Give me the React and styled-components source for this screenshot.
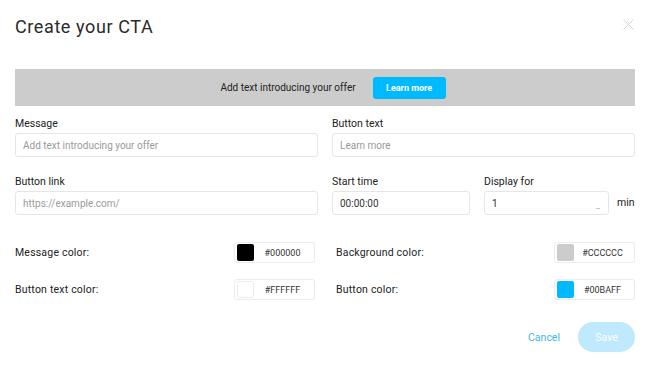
import React from "react";
import styled, { createGlobalStyle } from "styled-components";

const Global = createGlobalStyle`
  body {
    margin: 0;
    background: #fff;
    font-family: Roboto, "Liberation Sans", sans-serif;
    color: #333;
  }
`;

const Dialog = styled.div`
  width: 650px;
  height: 365px;
  box-sizing: border-box;
  padding: 14px 15px 0;
  position: relative;
`;

const Header = styled.div`
  display: flex;
  justify-content: space-between;
  align-items: flex-start;
  height: 55px;
`;

const Title = styled.h1`
  margin: 0;
  font-size: 18px;
  line-height: 26px;
  font-weight: 400;
  letter-spacing: 0.6px;
  color: #2a2a2a;
`;

const Close = styled.div`
  width: 11px;
  height: 11px;
  margin-top: 1px;
  margin-right: 1px;
  color: #d6d6d6;
`;

const Banner = styled.div`
  height: 37px;
  background: #cccccc;
  display: flex;
  align-items: center;
  justify-content: center;
  gap: 17px;
  padding-left: 16px;
`;

const BannerText = styled.span`
  font-size: 10px;
  color: #222;
`;

const BannerButton = styled.span`
  width: 73px;
  height: 22px;
  border-radius: 3px;
  background: #00baff;
  color: #fff;
  font-size: 9px;
  font-weight: 700;
  display: flex;
  align-items: center;
  justify-content: center;
`;

const Fields = styled.div`
  display: grid;
  grid-template-columns: 303px 303px;
  column-gap: 14px;
  row-gap: 19px;
  margin-top: 12px;
`;

const Field = styled.div`
  display: flex;
  flex-direction: column;
  width: ${(p) => p.$w || "auto"};
`;

const Label = styled.label`
  font-size: 10.5px;
  line-height: 12px;
  color: #222;
  margin-bottom: 3px;
`;

const Input = styled.div`
  height: 24px;
  box-sizing: border-box;
  border: 1px solid #e6e6e6;
  border-radius: 3px;
  padding: 0 7px;
  font-size: 10px;
  display: flex;
  align-items: center;
  color: ${(p) => (p.$placeholder ? "#9a9a9a" : "#333")};
  position: relative;
`;

const Spin = styled.span`
  position: absolute;
  right: 8px;
  bottom: 5px;
  width: 4px;
  height: 1px;
  background: #c8c8c8;
`;

const SplitRow = styled.div`
  display: flex;
  align-items: flex-end;
  gap: 14px;
`;

const Unit = styled.span`
  font-size: 10.5px;
  color: #222;
  line-height: 24px;
  margin-left: -6px;
`;

const Colors = styled.div`
  display: grid;
  grid-template-columns: 300px 299px;
  column-gap: 21px;
  row-gap: 16px;
  margin-top: 27px;
`;

const ColorRow = styled.div`
  display: flex;
  align-items: center;
  justify-content: space-between;
  height: 21px;
`;

const ColorLabel = styled.span`
  font-size: 10.5px;
  line-height: 12px;
  color: #222;
  letter-spacing: 0.2px;
  margin-top: 1px;
`;

const ColorBox = styled.div`
  width: 81px;
  height: 21px;
  box-sizing: border-box;
  border: 1px solid #ececec;
  border-radius: 3px;
  display: flex;
  align-items: center;
  padding-left: 2px;
`;

const Swatch = styled.span`
  width: 17px;
  height: 17px;
  border-radius: 2px;
  background: ${(p) => p.$color};
  border: ${(p) => (p.$color === "#FFFFFF" ? "1px solid #ececec" : "none")};
  box-sizing: border-box;
`;

const Hex = styled.span`
  flex: 1;
  text-align: center;
  font-size: 9px;
  color: #333;
  padding-right: 3px;
`;

const Footer = styled.div`
  display: flex;
  justify-content: flex-end;
  align-items: center;
  gap: 18px;
  margin-top: 22px;
`;

const Cancel = styled.span`
  font-size: 10.5px;
  color: #45b5e6;
`;

const Save = styled.span`
  width: 57px;
  height: 30px;
  border-radius: 15px;
  background: #bfe9fc;
  color: #fff;
  font-size: 10.5px;
  display: flex;
  align-items: center;
  justify-content: center;
`;

const colors = [
  { label: "Message color:", value: "#000000" },
  { label: "Background color:", value: "#CCCCCC" },
  { label: "Button text color:", value: "#FFFFFF" },
  { label: "Button color:", value: "#00BAFF" },
];

export default function App() {
  return (
    <>
      <Global />
      <Dialog>
        <Header>
          <Title>Create your CTA</Title>
          <Close>
            <svg width="11" height="11" viewBox="0 0 11 11">
              <path d="M0.5 0.5L10.5 10.5M10.5 0.5L0.5 10.5" stroke="currentColor" strokeWidth="1" />
            </svg>
          </Close>
        </Header>
        <Banner>
          <BannerText>Add text introducing your offer</BannerText>
          <BannerButton>Learn more</BannerButton>
        </Banner>
        <Fields>
          <Field>
            <Label>Message</Label>
            <Input $placeholder>Add text introducing your offer</Input>
          </Field>
          <Field>
            <Label>Button text</Label>
            <Input $placeholder>Learn more</Input>
          </Field>
          <Field>
            <Label>Button link</Label>
            <Input $placeholder>https://example.com/</Input>
          </Field>
          <SplitRow>
            <Field $w="138px">
              <Label>Start time</Label>
              <Input>00:00:00</Input>
            </Field>
            <Field $w="125px">
              <Label>Display for</Label>
              <Input>
                1
                <Spin />
              </Input>
            </Field>
            <Unit>min</Unit>
          </SplitRow>
        </Fields>
        <Colors>
          {colors.map((c) => (
            <ColorRow key={c.label}>
              <ColorLabel>{c.label}</ColorLabel>
              <ColorBox>
                <Swatch $color={c.value} />
                <Hex>{c.value}</Hex>
              </ColorBox>
            </ColorRow>
          ))}
        </Colors>
        <Footer>
          <Cancel>Cancel</Cancel>
          <Save>Save</Save>
        </Footer>
      </Dialog>
    </>
  );
}
